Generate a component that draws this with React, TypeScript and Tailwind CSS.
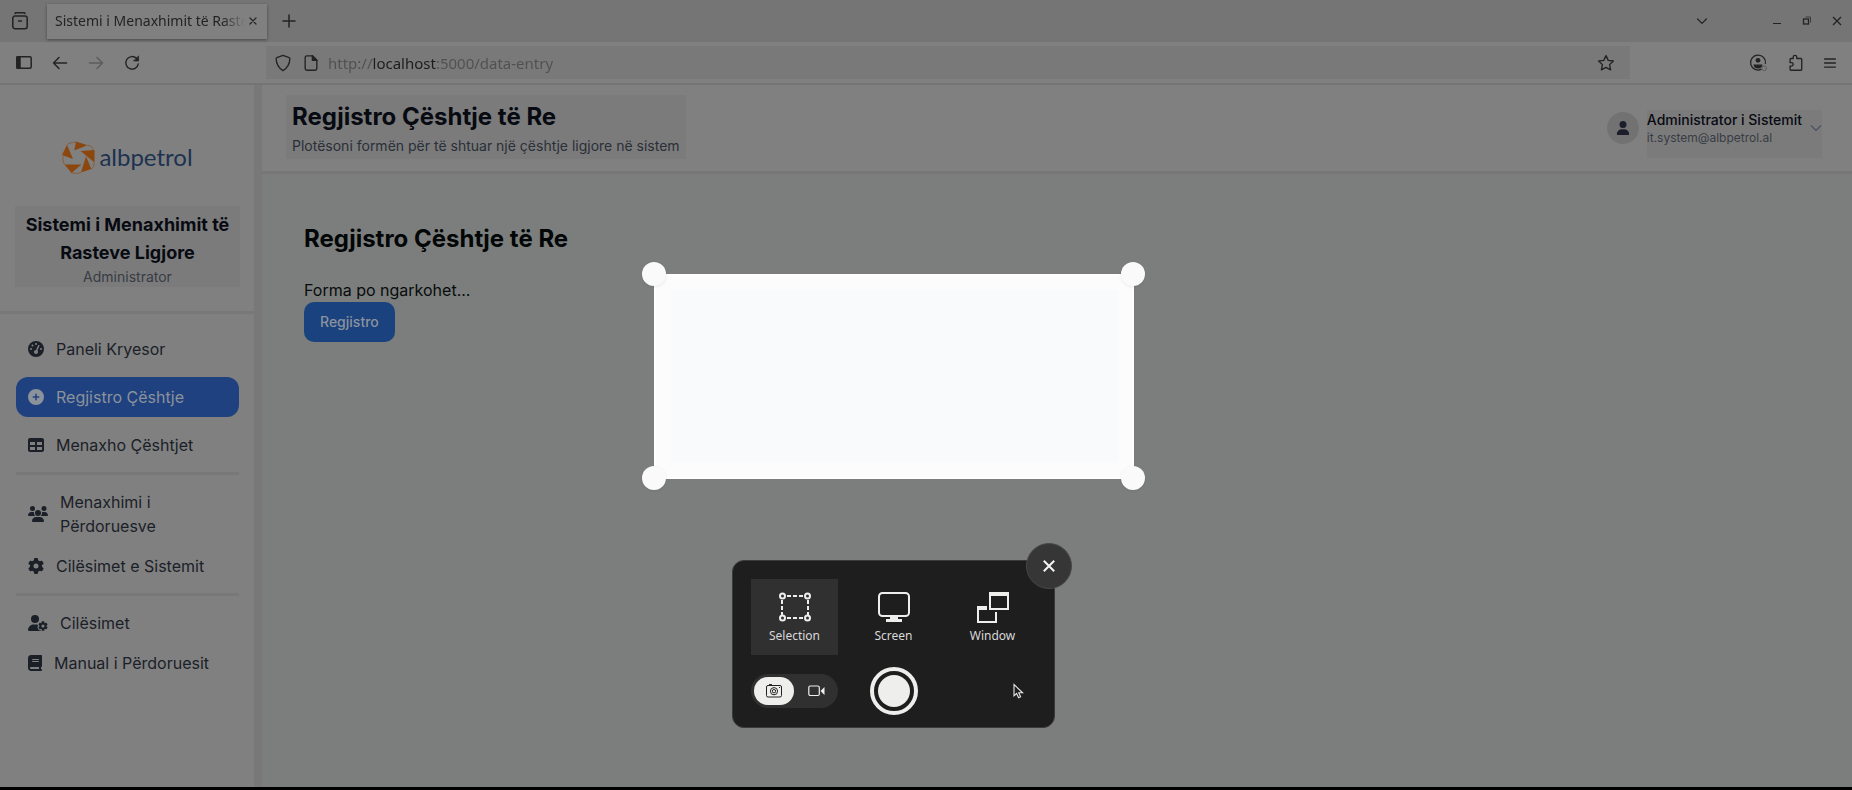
import React from "react";
import {
  FaGaugeHigh,
  FaCirclePlus,
  FaTable,
  FaUsers,
  FaGear,
  FaUserGear,
  FaBook,
  FaUser,
} from "react-icons/fa6";

const ink = "text-[#1b2028]";

function IconButton({ label, className = "", children }: { label: string; className?: string; children: React.ReactNode }) {
  return (
    <button type="button" aria-label={label} className={`flex shrink-0 items-center justify-center ${className}`}>
      {children}
    </button>
  );
}

function Line({ size = 20, width = 1.5, children }: { size?: number; width?: number; children: React.ReactNode }) {
  return (
    <svg width={size} height={size} viewBox="0 0 20 20" fill="none" stroke="currentColor" strokeWidth={width} strokeLinecap="round" strokeLinejoin="round">
      {children}
    </svg>
  );
}

function TabBar() {
  return (
    <div className="flex h-[42px] items-center bg-[#757575] text-[#232323]">
      <IconButton label="Recent browsing" className="w-10">
        <Line size={18} width={1.7}>
          <path d="M4.500 1.500c.3-.5.700-.7 1.200-.7h8.600c.5 0 .9.200 1.200.7" />
          <rect x="2" y="4.500" width="16" height="14" rx="2.500" />
          <path d="M8.500 10h3" />
        </Line>
      </IconButton>
      <div className="ml-[7px] flex h-[35px] w-[220px] items-center bg-[#808080] pl-2 shadow-[0_1px_3px_rgba(0,0,0,0.4)]">
        <span className="w-[190px] whitespace-nowrap text-sm leading-5 [mask-image:linear-gradient(to_right,black_88%,transparent)]">
          Sistemi i Menaxhimit të Raste
        </span>
        <IconButton label="Close tab" className="ml-0.5 w-3">
          <Line size={14} width={2}><path d="M5 5l10 10M15 5L5 15" /></Line>
        </IconButton>
      </div>
      <IconButton label="New tab" className="ml-3 w-5">
        <Line size={20}><path d="M10 4v12M4 10h12" /></Line>
      </IconButton>
      <div className="grow" />
      <IconButton label="List all tabs" className="mr-[52px] w-4">
        <Line size={20}><path d="M4.500 7.500L10 13l5.500-5.500" /></Line>
      </IconButton>
      <IconButton label="Minimize" className="w-[30px]">
        <svg width="10" height="10" viewBox="0 0 10 10" fill="none" stroke="currentColor"><path d="M1 7.500h8" /></svg>
      </IconButton>
      <IconButton label="Restore" className="w-[30px]">
        <svg width="10" height="10" viewBox="0 0 10 10" fill="none" stroke="currentColor">
          <rect x="1.500" y="3" width="5" height="5" strokeWidth="1.300" />
          <path d="M3.500 1h5v5.500" strokeWidth=".7" />
        </svg>
      </IconButton>
      <IconButton label="Close window" className="w-[30px]">
        <svg width="10" height="10" viewBox="0 0 10 10" fill="none" stroke="currentColor" strokeWidth="1.300"><path d="M1 1l8 8M9 1L1 9" /></svg>
      </IconButton>
    </div>
  );
}

function Toolbar() {
  return (
    <div className="flex h-[43px] items-center border-b-2 border-[#747474] bg-[#808080] pl-1.5 pr-3 text-[#232323]">
      <IconButton label="Sidebar" className="w-9">
        <svg width="16" height="13" viewBox="0 0 16 13" fill="none" stroke="currentColor" strokeWidth="1.500">
          <rect x=".8" y=".8" width="14.400" height="11.400" rx="1.500" />
          <path d="M1 1h3v11H1z" fill="currentColor" />
        </svg>
      </IconButton>
      <IconButton label="Back" className="w-9"><Line size={20}><path d="M16.500 10h-13M9 4.500L3.500 10 9 15.500" /></Line></IconButton>
      <IconButton label="Forward" className="w-9 text-[#5c5c5c]"><Line size={20}><path d="M3.500 10h13M11 4.500l5.500 5.500-5.500 5.500" /></Line></IconButton>
      <IconButton label="Reload" className="w-9">
        <Line size={18}>
          <path d="M17 11a7 7 0 1 1-2-6.200" />
          <path d="M17.300 2.500v5.200h-5.200z" fill="currentColor" strokeWidth=".8" />
        </Line>
      </IconButton>
      <div className="ml-[116px] flex h-[33px] grow items-center bg-[#797979] pl-2">
        <IconButton label="Protections" className="w-[18px]">
          <Line size={18}><path d="M10 1.500l6.800 2.600c.5.200.8.600.8 1.200-.2 5.700-2.700 10.300-7.600 13.200C5.100 15.600 2.600 11 2.400 5.300c0-.6.3-1 .8-1.200z" /></Line>
        </IconButton>
        <IconButton label="Site information" className="ml-2.5 w-[18px]">
          <Line size={18}>
            <path d="M5.500 2h6l5 5v9c0 1-.8 2-2 2h-9c-1.200 0-2-.8-2-2V4c0-1.200.8-2 2-2z" />
            <path d="M11.500 2v5h5z" fill="currentColor" />
          </Line>
        </IconButton>
        <input
          type="text"
          aria-label="Address"
          defaultValue="http://localhost:5000/data-entry"
          className="ml-2 min-w-0 grow bg-[linear-gradient(to_right,#505050_44px,#1c1c1c_44px,#1c1c1c_108px,#505050_108px)] bg-clip-text text-[15px] leading-5 text-transparent outline-none"
        />
        <IconButton label="Bookmark" className="mr-3.5 w-5">
          <Line size={18}><path d="M10 1.800l2.500 5.300 5.700.7-4.200 4 1.100 5.800-5.100-2.800-5.100 2.800L6 11.800l-4.200-4 5.700-.7z" /></Line>
        </IconButton>
      </div>
      <IconButton label="Account" className="ml-[119px] w-[18px]">
        <svg width="18" height="18" viewBox="0 0 18 18" fill="none" stroke="currentColor" strokeWidth="1.300">
          <path d="M12.500 15.200A7.500 7.500 0 1 1 16.400 10" />
          <circle cx="9" cy="6.300" r="2.400" fill="currentColor" stroke="none" />
          <path d="M4.500 10.500h9c0 2.500-2 4-4.500 4s-4.500-1.500-4.500-4z" fill="currentColor" stroke="none" />
          <circle cx="15.200" cy="14.300" r="2.300" stroke="#5c5c5c" strokeWidth="1" />
        </svg>
      </IconButton>
      <IconButton label="Extensions" className="ml-[19px] w-[18px]">
        <Line size={18}><path d="M8 5V3.500a2 2 0 0 1 4 0V5h4.500c.6 0 1 .4 1 1v11c0 .6-.4 1-1 1h-11c-.6 0-1-.4-1-1v-3.500H6a2 2 0 0 0 0-4H4.500V6c0-.6.4-1 1-1z" /></Line>
      </IconButton>
      <IconButton label="Menu" className="ml-4 w-5">
        <Line size={18}><path d="M4 5.500h12M4 10h12M4 14.500h12" /></Line>
      </IconButton>
    </div>
  );
}

function Logo() {
  return (
    <div className="flex h-[36px] items-center justify-center gap-1 pb-0.5">
      <svg width="33" height="33" viewBox="0 0 33 33" fill="#8c470e">
        <path d="M14 .5L25.500 4.200 12.300 9.500z" />
        <path d="M18.500 10L32.500 9v12.500z" />
        <path d="M24 15.300L29.300 28 19 31.500z" />
        <path d="M2.500 23.500H19.500L9.500 32z" />
        <path d="M5 3.800L11 18 0 14z" />
        <path d="M14 1C9 1.500 6 2.500 5 3.800M25.500 4.200c4 .8 5.500 2.500 5.500 5M32 21.500c.3 3-1 5-2.700 6.500M19 31.500c-3 1-6 1-9.500.5M2.500 23.500C1 21 .8 18 1 15" fill="none" stroke="#8c470e" strokeWidth=".6" />
      </svg>
      <span className="font-[Lato,sans-serif] text-2xl leading-8 text-[#1c3250]">albpetrol</span>
    </div>
  );
}

function NavItem({ icon, active = false, children }: { icon: React.ReactNode; active?: boolean; children: React.ReactNode }) {
  return (
    <a
      href="#"
      className={`flex items-center gap-3 rounded-xl px-3 py-2 text-base leading-6 ${active ? "bg-[#1f417f] text-[#8b929c]" : ink}`}
    >
      <span className="shrink-0">{icon}</span>
      {children}
    </a>
  );
}

function Sidebar() {
  return (
    <aside className="w-[262px] shrink-0 border-r-8 border-[#787878] bg-[#808080]">
      <div className="border-b-3 border-[#787878] pb-6 pl-[15px] pr-3.5 pt-[55px]">
        <Logo />
        <div className="mt-[30px] bg-[#7b7b7b] pt-[5px] text-center">
          <h1 className="text-lg font-bold leading-7 text-[#080a12]">Sistemi i Menaxhimit të Rasteve Ligjore</h1>
          <p className="text-sm leading-5 text-[#383c44]">Administrator</p>
        </div>
      </div>
      <nav className="flex flex-col pl-4 pr-[15px] pt-[15px]">
        <div className="flex flex-col gap-2">
          <NavItem icon={<FaGaugeHigh className="h-4 w-4" />}>Paneli Kryesor</NavItem>
          <NavItem active icon={<FaCirclePlus className="h-4 w-4" />}>Regjistro Çështje</NavItem>
          <NavItem icon={<FaTable className="h-4 w-4" />}>Menaxho Çështjet</NavItem>
        </div>
        <hr className="my-[7px] border-t-3 border-[#787878]" />
        <NavItem icon={<FaUsers className="h-4 w-5" />}>Menaxhimi i Përdoruesve</NavItem>
        <NavItem icon={<FaGear className="h-4 w-4" />}>Cilësimet e Sistemit</NavItem>
        <hr className="my-[7px] border-t-3 border-[#787878]" />
        <NavItem icon={<FaUserGear className="h-4 w-5" />}>Cilësimet</NavItem>
        <NavItem icon={<FaBook className="h-4 w-3.5" />}>Manual i Përdoruesit</NavItem>
      </nav>
    </aside>
  );
}

function PageHeader() {
  return (
    <header className="flex items-start justify-between border-b-3 border-[#777777] bg-[#808080] pb-3 pl-6 pr-[30px] pt-2.5">
      <div className="bg-[#7b7b7b] px-1.5 pt-1.5">
        <h2 className="text-2xl font-bold leading-8 text-[#080a12]">Regjistro Çështje të Re</h2>
        <p className="text-sm leading-[26px] text-[#2a2f38]">Plotësoni formën për të shtuar një çështje ligjore në sistem</p>
      </div>
      <button type="button" className="flex items-start gap-2 pt-[15px] text-left">
        <span className="mt-0.5 flex h-8 w-8 items-center justify-center rounded-full bg-[#727272] text-[#1d1e2c]">
          <FaUser className="h-3.5 w-3.5" />
        </span>
        <span className="flex h-12 items-start gap-2 bg-[#7b7b7b]">
          <span>
            <span className="block text-sm font-medium leading-5 text-[#080a12]">Administrator i Sistemit</span>
            <span className="block text-xs leading-4 text-[#383c44]">it.system@albpetrol.al</span>
          </span>
          <svg className="mt-3 text-[#4b535e]" width="12" height="12" viewBox="0 0 12 12" fill="none" stroke="currentColor" strokeWidth="1.200"><path d="M1 3.500l5 5 5-5" /></svg>
        </span>
      </button>
    </header>
  );
}

function CaptureMode({ label, active = false, children }: { label: string; active?: boolean; children: React.ReactNode }) {
  return (
    <button type="button" className={`flex h-[76px] flex-1 flex-col items-center pt-[13px] ${active ? "bg-[#303030]" : ""}`}>
      <svg width="32" height="32" viewBox="0 0 32 32" fill="none" stroke="#eeeeec" strokeWidth="2">{children}</svg>
      <span className="mt-[3px] font-['Noto_Sans',sans-serif] text-xs leading-[18px] text-[#d8d8d8]">{label}</span>
    </button>
  );
}

function CapturePanel() {
  return (
    <section aria-label="Screenshot" className="absolute left-[732px] top-[560px] w-[323px] rounded-xl border border-[#3a3a3a] bg-[#1e1e1e] px-[18px] pb-[12px] pt-[18px]">
      <div className="flex gap-3">
        <CaptureMode label="Selection" active>
          <path d="M7 4h18M7 26h18M3 7v16M29 7v16" strokeDasharray="4 2" strokeDashoffset="-1" />
          <circle cx="3.500" cy="4" r="2.500" />
          <circle cx="28.500" cy="4" r="2.500" />
          <circle cx="3.500" cy="26" r="2.500" />
          <circle cx="28.500" cy="26" r="2.500" />
        </CaptureMode>
        <CaptureMode label="Screen">
          <rect x="1" y="1" width="30" height="23" rx="3.500" />
          <path d="M12 24h8v3h4v3H8v-3h4z" fill="#eeeeec" stroke="none" />
        </CaptureMode>
        <CaptureMode label="Window">
          <path d="M13 1h18v16H13z" />
          <path d="M12 0h20v4H12z" fill="#eeeeec" stroke="none" />
          <path d="M10 15H1v15h18V20" />
          <path d="M0 14h10v4H0z" fill="#eeeeec" stroke="none" />
        </CaptureMode>
      </div>
      <div className="mt-3 grid grid-cols-3 items-center gap-3">
        <div className="flex h-[34px] items-center rounded-full bg-[#303030] p-[3px]">
          <IconButton label="Take screenshot" className="h-7 w-10 rounded-full bg-[#eeeeec]">
            <svg width="16" height="14" viewBox="0 0 16 14" fill="none" stroke="#222" strokeWidth="1">
              <rect x=".5" y="1.500" width="15" height="11.500" rx="1.500" />
              <path d="M3 .6h3" />
              <circle cx="8" cy="7.200" r="3.600" />
              <circle cx="8" cy="7.200" r="1.700" />
              <path d="M13 3.500h1" />
            </svg>
          </IconButton>
          <IconButton label="Record screen" className="ml-1 h-7 flex-1">
            <svg width="17" height="12" viewBox="0 0 17 12" fill="none" stroke="#eeeeec" strokeWidth="1.200">
              <rect x=".8" y="1" width="10.500" height="9.500" rx="1.500" />
              <path d="M12.500 6L16.500 2v8z" fill="#eeeeec" stroke="none" />
            </svg>
          </IconButton>
        </div>
        <IconButton label="Capture" className="h-12 w-12 justify-self-center rounded-full border-4 border-[#eeeeec]">
          <span className="h-8 w-8 rounded-full bg-[#eeeeec]" />
        </IconButton>
        <svg className="ml-16" width="11" height="16" viewBox="0 0 11 16" fill="#1e1e1e" stroke="#e6e6e6" strokeWidth="1.100">
          <path d="M1 1.500v11.300l2.600-2.300 2 4.200 2-.9-1.900-4h3.900z" />
        </svg>
      </div>
      <IconButton label="Close" className="absolute -right-[18px] -top-[18px] h-[46px] w-[46px] rounded-full border border-[#484848] bg-[#363636]">
        <svg width="12" height="12" viewBox="0 0 12 12" stroke="#f4f4f4" strokeWidth="2"><path d="M.8.8l10.400 10.400M11.200.8L.8 11.200" /></svg>
      </IconButton>
    </section>
  );
}

function SelectionArea() {
  const dot = "absolute h-6 w-6 rounded-full bg-[#fafafa] shadow-[0_1px_3px_rgba(0,0,0,0.08)]";
  return (
    <div className="absolute left-[654px] top-[274px] h-[205px] w-[480px] border-2 border-white bg-[#f9fafc] shadow-[inset_0_0_0_14px_#fcfcfc]">
      <span className={`${dot} -left-3.5 -top-3.5`} />
      <span className={`${dot} -right-[13px] -top-3.5`} />
      <span className={`${dot} -bottom-[13px] -left-3.5`} />
      <span className={`${dot} -bottom-[13px] -right-[13px]`} />
    </div>
  );
}

export default function App() {
  return (
    <div className="relative flex min-h-screen flex-col border-b-3 border-black bg-[#808080] font-[Inter,sans-serif]">
      <div className="font-['Noto_Sans',sans-serif]">
        <TabBar />
        <Toolbar />
      </div>
      <div className="flex grow">
        <Sidebar />
        <div className="flex min-w-0 grow flex-col bg-[#7b7e7d]">
          <PageHeader />
          <main className="flex flex-col items-start px-[42px] pt-[49px]">
            <h2 className="text-2xl font-bold leading-8 text-[#030606]">Regjistro Çështje të Re</h2>
            <p className="mt-[23px] text-base leading-6 text-[#080c0c]">Forma po ngarkohet...</p>
            <button type="button" className="h-10 rounded-[10px] bg-[#19427f] px-4 text-sm font-medium text-[#8b929c]">Regjistro</button>
          </main>
        </div>
      </div>
      <SelectionArea />
      <CapturePanel />
    </div>
  );
}
